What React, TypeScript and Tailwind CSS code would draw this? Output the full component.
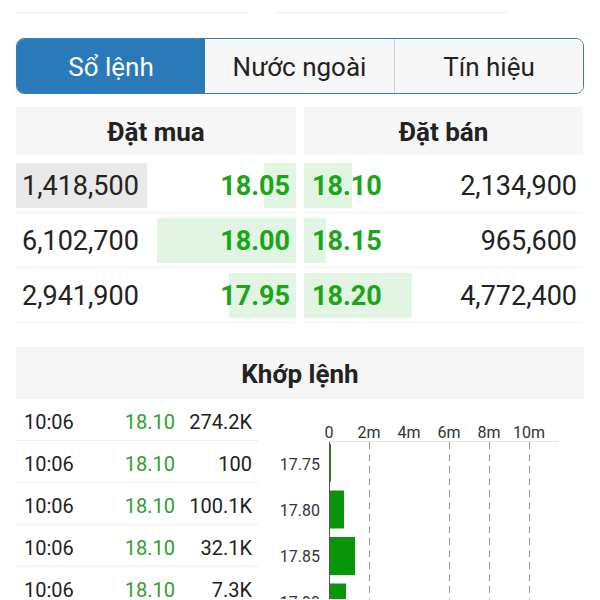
const bids = [
  { qty: "1,418,500", price: "18.05", bar: 32, hl: true },
  { qty: "6,102,700", price: "18.00", bar: 139, hl: false },
  { qty: "2,941,900", price: "17.95", bar: 67, hl: false },
];

const asks = [
  { qty: "2,134,900", price: "18.10", bar: 48 },
  { qty: "965,600", price: "18.15", bar: 22 },
  { qty: "4,772,400", price: "18.20", bar: 108 },
];

const trades = [
  { time: "10:06", price: "18.10", vol: "274.2K" },
  { time: "10:06", price: "18.10", vol: "100" },
  { time: "10:06", price: "18.10", vol: "100.1K" },
  { time: "10:06", price: "18.10", vol: "32.1K" },
  { time: "10:06", price: "18.10", vol: "7.3K" },
];

const VolumeChart = () => {
  const x0 = 71;
  const step = 40;
  const ticks = ["0", "2m", "4m", "6m", "8m", "10m"];
  const grid = [1, 3, 4, 5];
  const bars = [
    { label: "17.75", w: 2 },
    { label: "17.80", w: 15 },
    { label: "17.85", w: 26 },
    { label: "17.90", w: 17 },
  ];
  return (
    <svg width="325" height="200" viewBox="0 0 325 200">
      <line x1={x0} y1="42.5" x2="300" y2="42.5" stroke="#e6e6e6" />
      {grid.map((g) => (
        <line
          key={g}
          x1={x0 + g * step + 0.5}
          y1="43"
          x2={x0 + g * step + 0.5}
          y2="200"
          stroke="#9a9a9a"
          strokeDasharray="7 5"
        />
      ))}
      {ticks.map((t, i) => (
        <text
          key={t}
          x={x0 + i * step}
          y="39"
          textAnchor="middle"
          fontSize="16"
          fill="#333"
          fontFamily="Roboto, sans-serif"
        >
          {t}
        </text>
      ))}
      {bars.map((b, i) => (
        <g key={b.label}>
          <text
            x="62"
            y={71 + i * 46}
            textAnchor="end"
            fontSize="16"
            fill="#333"
            fontFamily="Roboto, sans-serif"
          >
            {b.label}
          </text>
          <rect x={x0} y={45 + i * 46.5} width={b.w} height="38" fill="#0a960a" />
        </g>
      ))}
      <line x1={x0 + 0.5} y1="43" x2={x0 + 0.5} y2="200" stroke="#555" />
    </svg>
  );
};

const App = () => {
  return (
    <div className="h-[600px] w-[600px] overflow-hidden bg-white font-['Roboto',sans-serif] text-[#222]">
      {/* remnants of the block above */}
      <div className="flex h-[13px] gap-[28px] pl-[15px]">
        <div className="w-[232px] border-b border-[#ececec]"></div>
        <div className="w-[232px] border-b border-[#ececec]"></div>
      </div>

      {/* tabs */}
      <div className="mx-[16px] mt-[25px] flex h-[56px] overflow-hidden rounded-[8px] border border-[#2f7fbf] text-[26px]">
        <div className="flex w-[188px] items-center justify-center bg-[#2a7aba] pt-[3px] text-white">
          Sổ lệnh
        </div>
        <div className="flex w-[189px] items-center justify-center bg-[#f7f7f7] pt-[3px]">
          Nước ngoài
        </div>
        <div className="flex flex-1 items-center justify-center border-l border-[#cfcfcf] bg-[#f7f7f7] pt-[3px]">
          Tín hiệu
        </div>
      </div>

      {/* order book */}
      <div className="mt-[13px] flex gap-[8px] pl-[16px]">
        <div className="w-[280px]">
          <div className="flex h-[48px] items-center justify-center bg-[#f6f6f6] pt-[3px] text-[26px] font-bold">
            Đặt mua
          </div>
          <div className="mt-[3px]">
            {bids.map((b) => (
              <div
                key={b.price}
                className="relative flex h-[55px] items-center justify-between border-b border-[#efefef] text-[27px]"
              >
                <div className="absolute right-0 top-[5px] h-[45px] bg-[#e2f4e2]" style={{ width: b.bar }}></div>
                <div className={`relative flex h-[45px] items-center pl-[6px] pr-[8px] pt-[3px] ${b.hl ? "bg-[#e9e9e9]" : ""}`}>
                  {b.qty}
                </div>
                <div className="relative pr-[6px] pt-[3px] font-bold text-[#1ba51b]">{b.price}</div>
              </div>
            ))}
          </div>
        </div>
        <div className="w-[279px]">
          <div className="flex h-[48px] items-center justify-center bg-[#f6f6f6] pt-[3px] text-[26px] font-bold">
            Đặt bán
          </div>
          <div className="mt-[3px]">
            {asks.map((a) => (
              <div
                key={a.price}
                className="relative flex h-[55px] items-center justify-between border-b border-[#efefef] pt-[3px] text-[27px]"
              >
                <div className="absolute left-0 top-[5px] h-[45px] bg-[#e2f4e2]" style={{ width: a.bar }}></div>
                <div className="relative pl-[8px] font-bold text-[#1ba51b]">{a.price}</div>
                <div className="relative pr-[6px]">{a.qty}</div>
              </div>
            ))}
          </div>
        </div>
      </div>

      {/* matched orders */}
      <div className="mx-[16px] mt-[24px] flex h-[52px] items-center justify-center bg-[#f6f6f6] pt-[3px] text-[26px] font-bold">
        Khớp lệnh
      </div>
      <div className="flex pl-[16px]">
        <div className="w-[242px]">
          {trades.map((t, i) => (
            <div key={i} className="flex h-[42px] items-center border-b border-[#efefef] pt-[4px] text-[20px]">
              <div className="w-[96px] pl-[8px]">{t.time}</div>
              <div className="w-[63px] text-right text-[#2f9e2f]">{t.price}</div>
              <div className="w-[77px] text-right">{t.vol}</div>
            </div>
          ))}
        </div>
        <VolumeChart />
      </div>
    </div>
  );
};

export default App;
